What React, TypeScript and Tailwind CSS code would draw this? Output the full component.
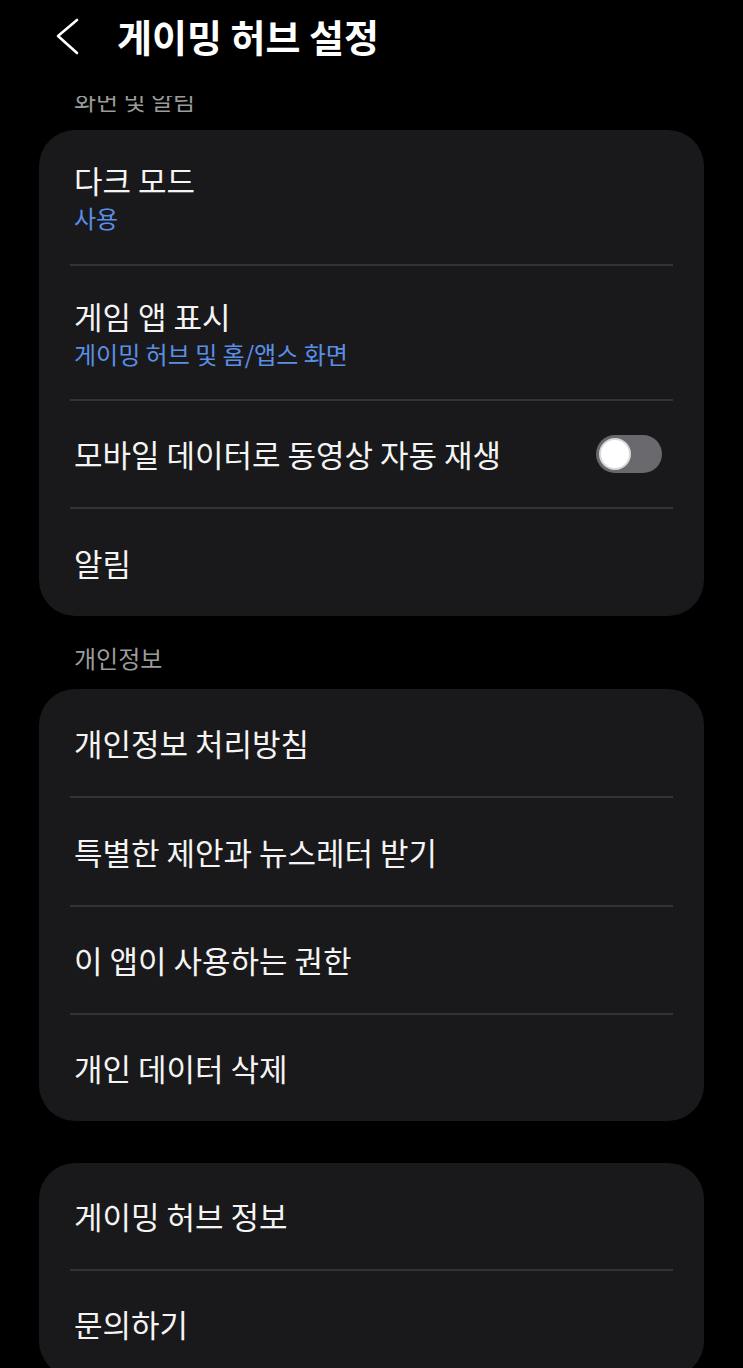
import React from "react";

const font = { fontFamily: '"Noto Sans CJK KR", "Noto Sans", sans-serif' };

function Divider() {
  return <div className="mx-[31px] h-[2px] bg-[#333336]" />;
}

function Row({ title, sub, toggle, h }: { title: string; sub?: string; toggle?: boolean; h: string }) {
  return (
    <div className={`flex items-center justify-between pl-[35px] pr-[42px] ${h}`}>
      <div className="flex flex-col">
        <span className="text-[31px] leading-[38px] text-[#f4f4f4]">{title}</span>
        {sub && <span className="text-[24px] leading-[30px] text-[#5b8fe6] mt-[4px]">{sub}</span>}
      </div>
      {toggle && (
        <div className="w-[66px] h-[38px] rounded-full bg-[#69696d] flex items-center">
          <div className="ml-[3px] w-[32px] h-[32px] rounded-full bg-white border-2 border-[#d8d8dc]" />
        </div>
      )}
    </div>
  );
}

export default function App() {
  return (
    <div className="min-h-[1368px] h-[1368px] overflow-hidden bg-black" style={font}>
      <div className="h-[96px] flex items-start pt-[14px]">
        <svg width="30" height="40" viewBox="0 0 30 40" className="ml-[52px] mt-[1px]">
          <path d="M25 5 L6 21 L25 38" stroke="#fff" strokeWidth="2.6" fill="none" strokeLinecap="round" strokeLinejoin="round" />
        </svg>
        <span className="ml-[35px] text-[38px] leading-[44px] font-bold text-white">게이밍 허브 설정</span>
      </div>
      <div className="h-[17px] overflow-hidden pl-[74px]">
        <div className="-mt-[10px] text-[24px] leading-[28px] text-[#9b9b9b]">화면 및 알림</div>
      </div>
      <div className="mt-[17px] mx-[39px] rounded-[36px] bg-[#19191b]">
        <Row title="다크 모드" sub="사용" h="h-[134px]" />
        <Divider />
        <Row title="게임 앱 표시" sub="게이밍 허브 및 홈/앱스 화면" h="h-[133px]" />
        <Divider />
        <Row title="모바일 데이터로 동영상 자동 재생" toggle h="h-[106px]" />
        <Divider />
        <Row title="알림" h="h-[107px]" />
      </div>
      <div className="pt-[28px] pb-[17px] pl-[74px] text-[24px] leading-[28px] text-[#9b9b9b]">개인정보</div>
      <div className="mx-[39px] rounded-[36px] bg-[#19191b]">
        <Row title="개인정보 처리방침" h="h-[107px]" />
        <Divider />
        <Row title="특별한 제안과 뉴스레터 받기" h="h-[107px]" />
        <Divider />
        <Row title="이 앱이 사용하는 권한" h="h-[106px]" />
        <Divider />
        <Row title="개인 데이터 삭제" h="h-[106px]" />
      </div>
      <div className="mt-[42px] mx-[39px] rounded-[36px] bg-[#19191b]">
        <Row title="게이밍 허브 정보" h="h-[106px]" />
        <Divider />
        <Row title="문의하기" h="h-[106px]" />
      </div>
    </div>
  );
}
